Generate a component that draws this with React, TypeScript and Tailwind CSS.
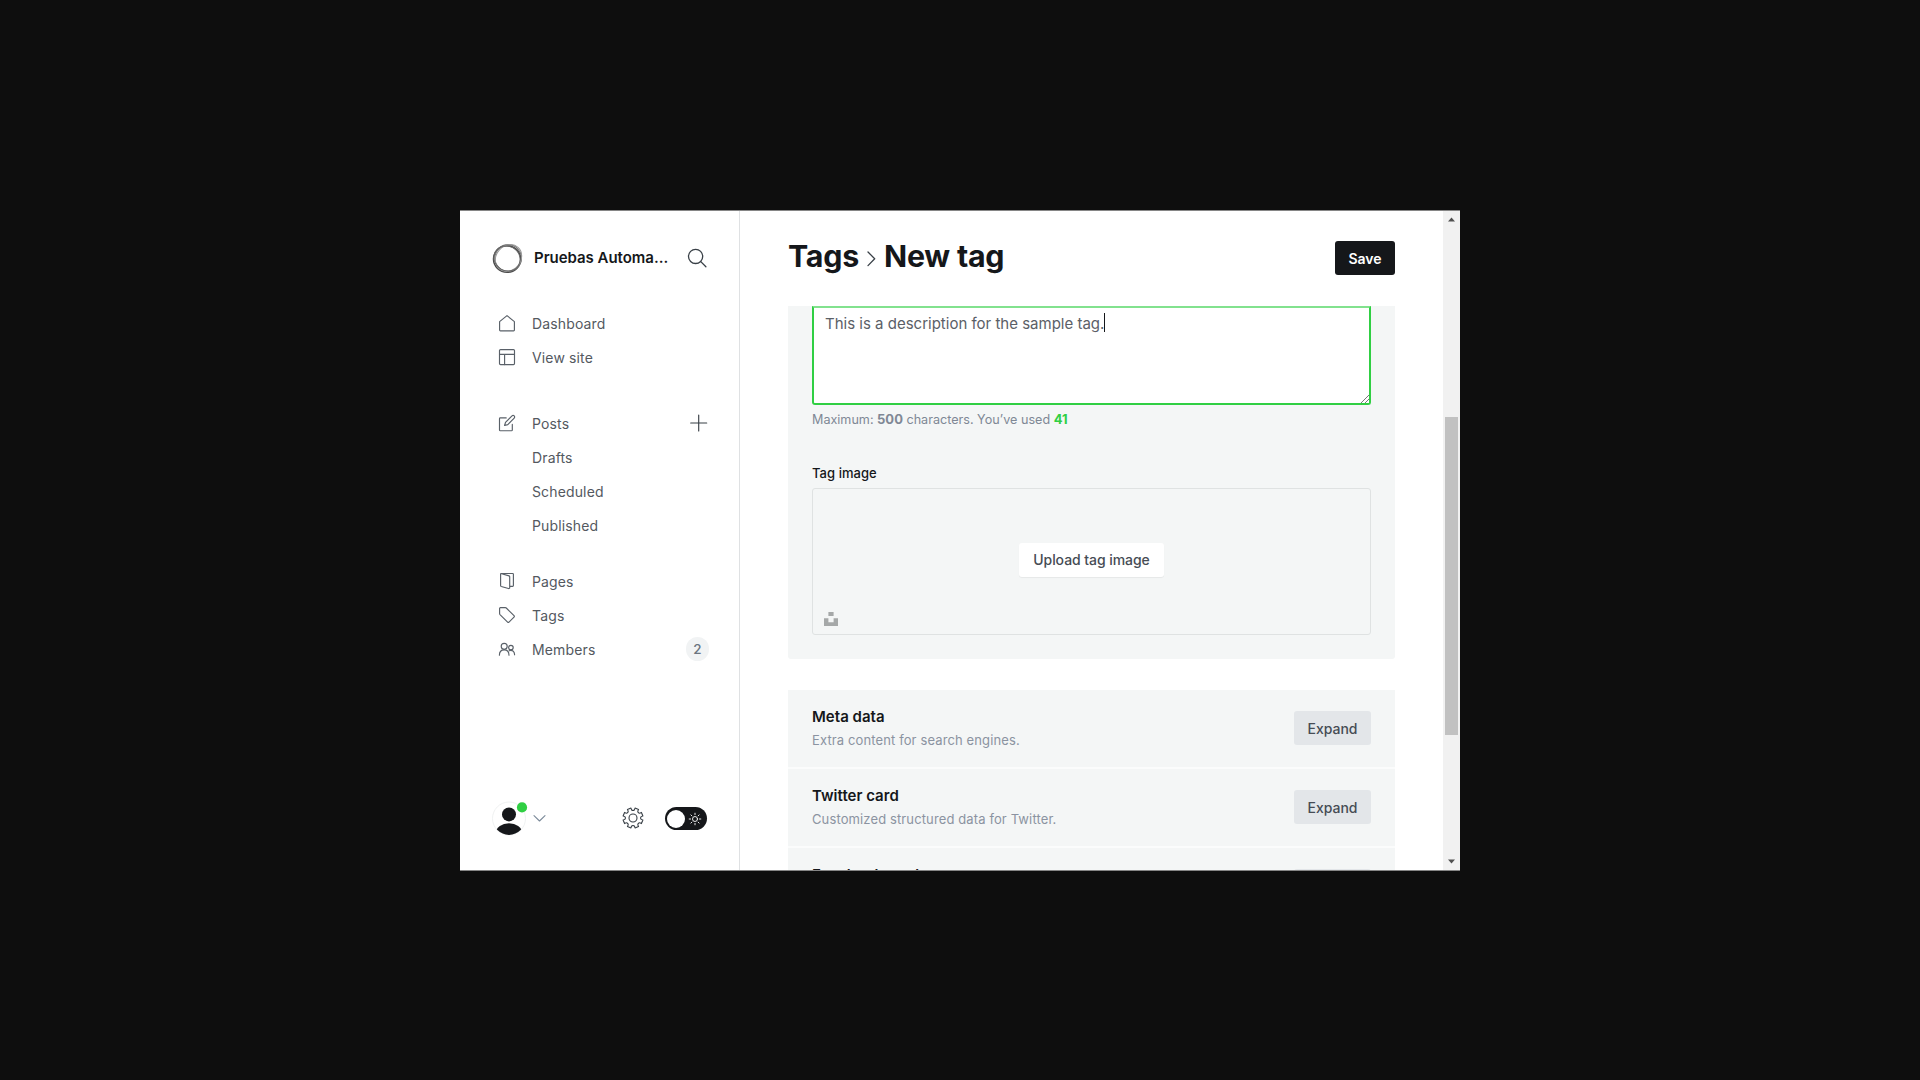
import React from "react";

const icon = "h-4 w-4 shrink-0 overflow-visible text-[#596068]";
const Svg = ({ children, className = icon, box = "0 0 16 16", sw = 1.15 }: { children: React.ReactNode; className?: string; box?: string; sw?: number }) => (
  <svg className={className} viewBox={box} fill="none" stroke="currentColor" strokeWidth={sw} strokeLinecap="round" strokeLinejoin="round">{children}</svg>
);

const HomeIcon = () => <Svg><path d="M.6 6.6 8 .6l7.4 6V15a.8.8 0 0 1-.8.8H1.4a.8.8 0 0 1-.8-.8Z" /></Svg>;
const LayoutIcon = () => <Svg><rect x=".5" y=".6" width="15" height="15" rx="1" /><path d="M.5 5.4h15M5.6 5.4v10.2" /></Svg>;
const EditIcon = () => (
  <Svg>
    <path d="M7.2 2.9H1.3a.8.8 0 0 0-.8.8v11.2a.8.8 0 0 0 .8.8h11.2a.8.8 0 0 0 .8-.8V9.4" />
    <path d="m8.8 9.6-3.2.9.9-3.1L13 .9a1.5 1.5 0 0 1 2.2 2.2Z" />
  </Svg>
);
const PagesIcon = () => (
  <Svg>
    <path d="m1.9.5 8.1 2.4a1 1 0 0 1 .7 1v10.7a.9.9 0 0 1-1.2.9l-7.2-2a1 1 0 0 1-.7-1V1.3A.8.8 0 0 1 2.4.5h11.2a.8.8 0 0 1 .8.8v11.3a.8.8 0 0 1-.8.8h-2.7" />
  </Svg>
);
const TagIcon = () => <Svg><path d="M.6 1.4A.8.8 0 0 1 1.4.6h4.9a1.5 1.5 0 0 1 1 .4l7.7 7.7a1 1 0 0 1 0 1.4l-5 5a1 1 0 0 1-1.4 0L1 7.6a1.5 1.5 0 0 1-.4-1Z" /></Svg>;
const MembersIcon = () => (
  <Svg>
    <circle cx="5.2" cy="5.3" r="3" />
    <path d="M.4 14.2c0-3.4 2-5.3 4.8-5.3s4.8 1.9 4.8 5.3" />
    <circle cx="11.9" cy="6.6" r="2.3" />
    <path d="M10.2 9.7c3-1.2 5.3.8 5.4 4.1" />
  </Svg>
);

const Row = ({ label, children, end }: { label: string; children?: React.ReactNode; end?: React.ReactNode }) => (
  <div className="flex h-[34px] items-center">
    <div className="w-[33px] shrink-0">{children}</div>
    <span className="flex-1 text-[14px] tracking-[0.14px] text-[#54595f]">{label}</span>
    {end}
  </div>
);

const GEAR = (() => {
  const p: string[] = [];
  for (let i = 0; i < 8; i++) {
    const a = (i * Math.PI) / 4 + Math.PI / 8;
    const at = (r: number, d: number) => `${(11 + r * Math.cos(a + d)).toFixed(2)} ${(11 + r * Math.sin(a + d)).toFixed(2)}`;
    p.push(`${i ? "L" : "M"}${at(10.1, -0.19)}L${at(10.1, 0.19)}Q${at(7.3, 0.2)} ${at(7.7, 0.39)}Q${at(7.3, 0.58)} ${at(10.1, 0.595)}`);
  }
  return p.join("") + "Z";
})();

const Sidebar = () => (
  <aside className="flex w-[280px] shrink-0 flex-col border-r border-[#dfe1e3] pb-[34px] pl-8 pr-[30px]">
    <div className="mt-[31px] flex h-8 items-center">
      <svg className="h-8 w-8 shrink-0" viewBox="0 0 32 32" fill="none">
        <ellipse cx="15.1" cy="17" rx="13.6" ry="13.3" stroke="#4b4b4b" strokeWidth="1.5" />
        <ellipse cx="16.2" cy="16" rx="13.3" ry="13.4" stroke="#777" strokeWidth="1.1" />
        <ellipse cx="16.5" cy="16" rx="14.3" ry="12.2" transform="rotate(-48 16.5 16)" stroke="#999" strokeWidth="1" />
        <ellipse cx="15" cy="16.5" rx="13.4" ry="12.2" transform="rotate(30 15 16.5)" stroke="#666" strokeWidth=".9" />
      </svg>
      <span className="ml-[10px] mt-px flex-1 whitespace-nowrap text-[15px] font-semibold tracking-[-0.03px] text-[#15171a]">Pruebas Automa...</span>
      <Svg className="mr-[3px] h-[18px] w-[18px] overflow-visible text-[#394047]" box="0 0 18 18" sw={1.3}><circle cx="7.6" cy="7.4" r="7.1" /><path d="m12.8 12.6 5.1 5.1" /></Svg>
    </div>
    <nav className="ml-[7px] mt-8">
      <Row label="Dashboard"><HomeIcon /></Row>
      <Row label="View site"><LayoutIcon /></Row>
      <div className="mt-8">
        <Row label="Posts" end={<Svg className="mr-[2px] h-4 w-4 overflow-visible text-[#394047]"><path d="M7.7 0v16M-.3 8h16" /></Svg>}><EditIcon /></Row>
        <Row label="Drafts" />
        <Row label="Scheduled" />
        <Row label="Published" />
      </div>
      <div className="mt-[22px]">
        <Row label="Pages"><PagesIcon /></Row>
        <Row label="Tags"><TagIcon /></Row>
        <Row label="Members" end={<span className="flex h-6 w-[23px] items-center justify-center rounded-full bg-[#f1f3f4] text-[13.5px] font-medium text-[#6b7480]">2</span>}><MembersIcon /></Row>
      </div>
    </nav>
    <div className="mt-auto flex items-center">
      <svg className="h-[35px] w-[36px] overflow-visible" viewBox="0 0 36 35">
        <defs><clipPath id="face"><circle cx="17" cy="17.5" r="16.4" /></clipPath></defs>
        <circle cx="17" cy="17.5" r="16.5" fill="#fff" stroke="#ebedee" strokeWidth=".8" />
        <g clipPath="url(#face)" fill="#15171a"><circle cx="17" cy="13.4" r="7" /><ellipse cx="17" cy="31.5" rx="13" ry="9.2" /></g>
        <circle cx="30" cy="6.4" r="5.1" fill="#30cf43" />
      </svg>
      <Svg className="ml-[6px] mr-px h-[7px] w-[11px] overflow-visible text-[#7c8b9a]" box="0 0 11 7" sw={1.1}><path d="M0 .6 5.5 6 11 .6" /></Svg>
      <Svg className="mb-px ml-[76px] h-[22px] w-[22px] text-[#394047]" box="0 0 22 22" sw={1.1}><path d={GEAR} /><circle cx="11" cy="11" r="4" /></Svg>
      <div className="ml-[21px] flex h-[23px] w-[42px] shrink-0 items-center justify-between rounded-full bg-[#15171a] pl-[2px] pr-[6px]">
        <span className="h-[18px] w-[18px] rounded-full bg-white" />
        <Svg className="h-3 w-3 overflow-visible text-white" box="0 0 12 12" sw={0.9}>
          <circle cx="6" cy="6" r="2.5" />
          <path d="M6 .2v1.4M6 10.4v1.4M.2 6h1.4M10.4 6h1.4M1.9 1.9l1 1M9.1 9.1l1 1M1.9 10.1l1-1M9.1 2.9l1-1" />
        </Svg>
      </div>
    </div>
  </aside>
);

const Section = ({ title, text }: { title: string; text: string }) => (
  <div className="flex h-[79px] justify-between border-b-2 border-[#fbfcfc] bg-[#f4f6f6] px-6">
    <div className="pt-[16px]">
      <h4 className="text-[15px] font-semibold leading-[22px] tracking-[0.02px] text-[#15171a]">{title}</h4>
      <p className="pt-px text-[13px] leading-[22px] tracking-[0.12px] text-[#8b93a1]">{text}</p>
    </div>
    <button className="mt-[21px] flex h-[34px] w-[77px] items-center justify-center rounded-[3px] bg-[#e3e6e9] text-[14px] font-medium text-[#464c54]">Expand</button>
  </div>
);

const Main = () => (
  <main className="flex min-w-0 flex-1 flex-col px-12">
    <header className="flex h-[95px] shrink-0 items-start justify-between">
      <h2 className="mt-[25px] flex text-[30.4px] font-bold leading-[40px] tracking-[-0.25px] text-[#15171a]">
        <span className="w-[72px]">Tags</span>
        <Svg className="ml-[8px] mr-[8px] mt-[16px] h-[14px] w-[8px] overflow-visible text-[#394047]" box="0 0 8 14" sw={1.3}><path d="m0 0 6.7 6.8L0 13.6" /></Svg>
        <span>New tag</span>
      </h2>
      <button className="mt-[30px] flex h-[34px] w-[60px] items-center justify-center rounded-[3px] bg-[#15171a] text-[14px] font-semibold text-white">Save</button>
    </header>
    <div className="min-h-0 flex-1 overflow-hidden">
      <section className="h-[353px] rounded-b-[3px] bg-[#f4f6f6] px-6">
        <div className="relative flex h-[99px] items-start rounded-b-[3px] border-2 border-t-[#82e28e] border-b-[#30cf43] border-x-[#30cf43] bg-white pl-[11px] pt-[5px]">
          <span className="text-[15px] leading-[22px] text-[#5b6067]">This is a description for the sample tag.</span>
          <span className="h-[19px] w-px bg-[#15171a]" />
          <svg className="absolute bottom-0 right-0 h-2 w-2" viewBox="0 0 8 8" stroke="#777" strokeWidth="1"><path d="M0 8 8 0M4 8l4-4" /></svg>
        </div>
        <p className="mt-[3px] text-[12.6px] leading-[22px] text-[#7f8895]">Maximum: <b className="text-[13px]">500</b> characters. You’ve used <b className="text-[13px] text-[#30cf43]">41</b></p>
        <h5 className="mt-[32px] text-[13px] font-medium leading-[20px] tracking-[0.05px] text-[#15171a]">Tag image</h5>
        <div className="relative mt-[5px] flex h-[147px] items-center justify-center rounded-[3px] border border-[#dfe2e2]">
          <button className="mt-[-4px] flex h-[34px] w-[145px] items-center justify-center rounded-[3px] bg-white text-[14px] font-medium tracking-[-0.06px] text-[#464c54] shadow-[0_1px_1px_rgba(0,0,0,0.06)]">Upload tag image</button>
          <svg className="absolute bottom-[8px] left-[11px] h-[14px] w-[14px]" viewBox="0 0 14 14" fill="#a5a8a8"><path d="M4.4 0h5.2v4H4.4ZM0 6.2h4.4v4h5.2v-4H14V14H0Z" /></svg>
        </div>
      </section>
      <section className="mt-[31px]">
        <Section title="Meta data" text="Extra content for search engines." />
        <Section title="Twitter card" text="Customized structured data for Twitter." />
        <div className="flex justify-between bg-[#f4f6f6] px-6">
          <h4 className="pt-[16px] text-[15px] font-semibold leading-[22px] text-[#15171a]">Facebook card</h4>
          <div className="mt-[21px] h-[34px] w-[77px] rounded-[3px] bg-[#e3e6e9]" />
        </div>
      </section>
    </div>
  </main>
);

const Scrollbar = () => (
  <div className="flex w-[17px] shrink-0 flex-col items-center bg-[#f1f1f1]">
    <svg className="mt-[6px] h-[5px] w-[7px] shrink-0" viewBox="0 0 7 5" fill="#505050"><path d="M3.5.5 7 4.5H0Z" /></svg>
    <div className="mt-[195px] h-[318px] w-[13px] shrink-0 bg-[#c1c1c1]" />
    <svg className="mb-[6px] mt-auto h-[5px] w-[7px] shrink-0" viewBox="0 0 7 5" fill="#505050"><path d="M3.5 4.5 7 .5H0Z" /></svg>
  </div>
);

export default function App() {
  return (
    <div className="flex h-[1080px] w-[1920px] items-start justify-center overflow-hidden bg-[#0e0e0e] pt-[210px] font-['Inter',sans-serif]">
      <div className="flex h-[661px] w-[1000px] overflow-hidden border-y border-[#868686] bg-white">
        <Sidebar />
        <Main />
        <Scrollbar />
      </div>
    </div>
  );
}
